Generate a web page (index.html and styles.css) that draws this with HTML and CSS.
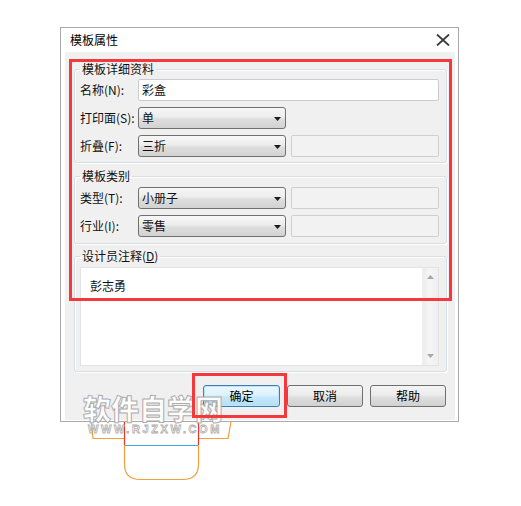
FILE: index.html
```html
<!DOCTYPE html>
<html lang="zh">
<head>
<meta charset="utf-8">
<title>模板属性</title>
<link rel="stylesheet" href="styles.css">
</head>
<body>
<div class="page">
  <div class="dialog">
    <div class="titlebar">
      <span class="title">模板属性</span>
      <svg class="close" width="14" height="12" viewBox="0 0 14 12"><path d="M1 0.5 L13 11.5 M13 0.5 L1 11.5" stroke="#3a3a3a" stroke-width="1.8" fill="none"/></svg>
    </div>
    <div class="client">
      <fieldset class="group g1">
        <legend>模板详细资料</legend>
        <div class="row"><span class="lbl">名称(N):</span><div class="input">彩盒</div></div>
        <div class="row"><span class="lbl">打印面(S):</span><div class="select"><span>单</span><svg width="7" height="4" viewBox="0 0 7 4"><path d="M0 0 H7 L3.5 4 Z" fill="#1a1a1a"/></svg></div></div>
        <div class="row"><span class="lbl">折叠(F):</span><div class="select"><span>三折</span><svg width="7" height="4" viewBox="0 0 7 4"><path d="M0 0 H7 L3.5 4 Z" fill="#1a1a1a"/></svg></div><div class="disabled"></div></div>
      </fieldset>
      <fieldset class="group g2">
        <legend>模板类别</legend>
        <div class="row"><span class="lbl">类型(T):</span><div class="select"><span>小册子</span><svg width="7" height="4" viewBox="0 0 7 4"><path d="M0 0 H7 L3.5 4 Z" fill="#1a1a1a"/></svg></div><div class="disabled"></div></div>
        <div class="row"><span class="lbl">行业(I):</span><div class="select"><span>零售</span><svg width="7" height="4" viewBox="0 0 7 4"><path d="M0 0 H7 L3.5 4 Z" fill="#1a1a1a"/></svg></div><div class="disabled"></div></div>
      </fieldset>
      <fieldset class="group g3">
        <legend>设计员注释(<u>D</u>)</legend>
        <div class="memo">
          <div class="memo-text">彭志勇</div>
          <div class="scrollbar">
            <svg width="7" height="4" viewBox="0 0 7 4"><path d="M0 4 H7 L3.5 0 Z" fill="#a8a8a8"/></svg>
            <svg width="7" height="4" viewBox="0 0 7 4"><path d="M0 0 H7 L3.5 4 Z" fill="#a8a8a8"/></svg>
          </div>
        </div>
      </fieldset>
      <div class="buttons">
        <div class="btn btn-default">确定</div>
        <div class="btn">取消</div>
        <div class="btn">帮助</div>
      </div>
    </div>
  </div>
  <svg class="figure" width="521" height="84" viewBox="0 0 521 84">
    <path d="M91.5 1 L93 16.5 H124.5" stroke="#f2a03c" stroke-width="1.2" fill="none"/>
    <path d="M198.5 16.5 H228 L231 0" stroke="#f2a03c" stroke-width="1.2" fill="none"/>
    <path d="M124.5 0 V23 M198.5 0 V23" stroke="#e8332e" stroke-width="1.2" fill="none"/>
    <path d="M124.5 23.5 H198.5" stroke="#3fa9e6" stroke-width="1.2" fill="none"/>
    <path d="M124.5 23 V42 Q124.5 57.5 140 57.5 H183 Q198.5 57.5 198.5 42 V23" stroke="#f2a03c" stroke-width="1.2" fill="none"/>
  </svg>
  <div class="mark">
    <div class="mark-cn">软件自学网</div>
    <div class="mark-en">WWW.RJZXW.COM</div>
  </div>
  <div class="hl hl-main"></div>
  <div class="hl hl-ok"></div>
</div>
</body>
</html>
```
FILE: styles.css
```css
html, body {
  margin: 0;
  padding: 0;
  background: #fff;
}
body {
  font-family: "Noto Sans CJK SC", "Noto Sans", sans-serif;
  font-size: 12px;
  color: #111;
}
.page {
  position: relative;
  width: 521px;
  height: 506px;
  overflow: hidden;
}
.dialog {
  margin: 27px 0 0 60px;
  width: 399px;
  height: 395px;
  box-sizing: border-box;
  border: 1px solid #a9a9a9;
  background: #fff;
  display: flex;
  flex-direction: column;
}
.titlebar {
  height: 24px;
  flex: none;
  display: flex;
  align-items: center;
  justify-content: space-between;
  padding: 0 8px 0 9px;
}
.title {
  font-size: 12px;
  line-height: 16px;
  color: #000;
}
.close {
  display: block;
  margin-top: -1px;
}
.client {
  flex: 1;
  margin: 0 3px 1px 4px;
  background: #f0f0f0;
  padding: 9px 8px 0 9px;
  display: flex;
  flex-direction: column;
}
.group {
  margin: 0;
  padding: 2px 7px 5px 5px;
  border: 1px solid #d5dfe5;
  border-radius: 3px;
  box-shadow: inset 1px 1px 0 #fff, 1px 1px 0 #fff;
  min-width: 0;
}
.group legend {
  padding: 0 2px;
  margin: 0;
  line-height: 16px;
  color: #111;
}
.group legend u {
  text-decoration: underline;
  text-underline-offset: 1px;
}
.g2 {
  margin-top: 5px;
  padding-top: 3px;
  padding-bottom: 6px;
}
.g3 {
  margin-top: 4px;
  padding-top: 3px;
  padding-bottom: 5px;
}
.row {
  display: flex;
  align-items: center;
  height: 22px;
}
.row + .row {
  margin-top: 6px;
}
.lbl {
  width: 58px;
  flex: none;
  line-height: 16px;
}
.input {
  width: 301px;
  height: 22px;
  box-sizing: border-box;
  border: 1px solid #c9ccd1;
  border-radius: 2px;
  background: #fff;
  padding: 0 0 0 3px;
  line-height: 20px;
}
.select {
  width: 148px;
  height: 22px;
  box-sizing: border-box;
  border: 1px solid #707070;
  border-radius: 3px;
  background: linear-gradient(#f7f7f7, #ececec 45%, #dedede 55%, #d2d2d2);
  padding: 0 4px 0 3px;
  display: flex;
  align-items: center;
  justify-content: space-between;
  line-height: 20px;
}
.select svg {
  display: block;
  margin-top: 1px;
}
.disabled {
  width: 148px;
  height: 22px;
  box-sizing: border-box;
  margin-left: 5px;
  border: 1px solid #cfcfcf;
  border-radius: 2px;
  background: #f2f2f2;
}
.memo {
  height: 99px;
  box-sizing: border-box;
  border: 1px solid #e2e3e6;
  background: #fff;
  display: flex;
}
.memo-text {
  flex: 1;
  padding: 10px 0 0 9px;
  line-height: 16px;
}
.scrollbar {
  width: 15px;
  flex: none;
  background: linear-gradient(90deg, #ececec, #f5f5f5 40%, #efefef);
  border-left: 1px solid #f0f0f0;
  display: flex;
  flex-direction: column;
  justify-content: space-between;
  align-items: center;
  padding: 7px 0 7px;
}
.scrollbar svg {
  display: block;
}
.buttons {
  margin-top: 13px;
  display: flex;
  justify-content: flex-end;
  gap: 7px;
  padding-right: 1px;
}
.btn {
  width: 76px;
  height: 22px;
  box-sizing: border-box;
  border: 1px solid #707070;
  border-radius: 3px;
  background: linear-gradient(#f4f4f4, #ececec 45%, #dfdfdf 55%, #d0d0d0);
  display: flex;
  align-items: center;
  justify-content: center;
  line-height: 16px;
  color: #000;
}
.btn-default {
  width: 77px;
  border-color: #3c7fb1;
  background: linear-gradient(#ecf7fd, #def2fc 45%, #c6e9fc 55%, #b2def6);
  box-shadow: inset 0 0 0 1px #bfe4f9;
}
.figure {
  display: block;
}
.mark {
  position: absolute;
  left: 83px;
  top: 394px;
  width: 145px;
  opacity: 0.92;
}
.mark-cn {
  font-family: "Noto Sans CJK SC", sans-serif;
  font-weight: 900;
  font-size: 28px;
  line-height: 28px;
  color: #fff;
  -webkit-text-stroke: 1px #a9a9a9;
  letter-spacing: 0;
}
.mark-en {
  margin-top: 2px;
  padding-left: 5px;
  font-family: "Liberation Sans", sans-serif;
  font-weight: 700;
  font-size: 11px;
  line-height: 11px;
  letter-spacing: 2.6px;
  color: #fff;
  -webkit-text-stroke: 0.8px #a9a9a9;
}
.hl {
  position: absolute;
  box-sizing: border-box;
  border: 3px solid #f5383b;
}
.hl-main {
  left: 69px;
  top: 59px;
  width: 383px;
  height: 242px;
}
.hl-ok {
  left: 192px;
  top: 373px;
  width: 95px;
  height: 45px;
}
```
